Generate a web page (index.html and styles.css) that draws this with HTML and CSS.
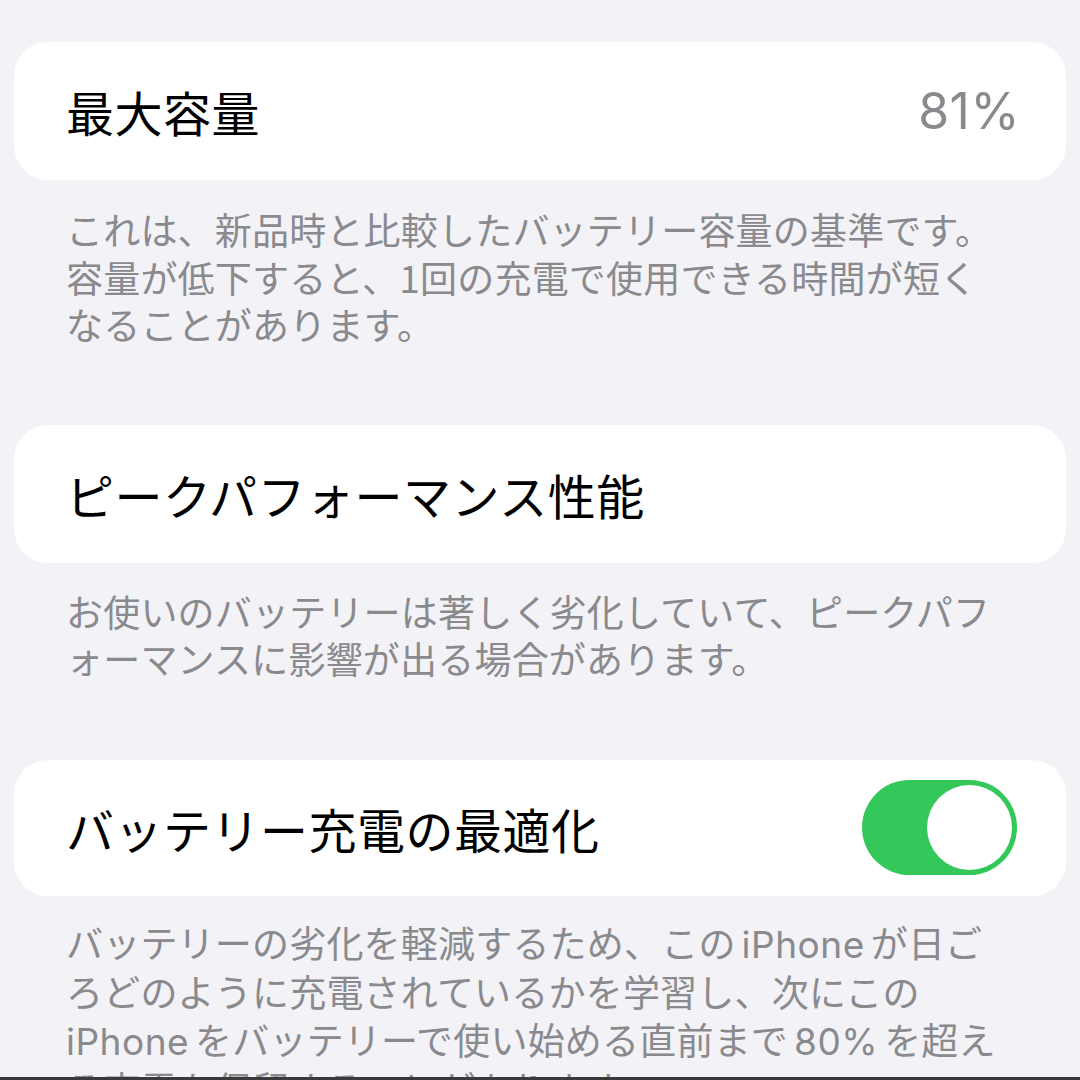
FILE: index.html
```html
<!DOCTYPE html>
<html lang="ja">
<head>
<meta charset="utf-8">
<title>バッテリーの状態</title>
<link rel="stylesheet" href="styles.css">
</head>
<body>
<div class="page">
  <div class="card card-first">
    <span class="title">最大容量</span>
    <span class="value">81%</span>
  </div>
  <p class="footer footer-first">これは、新品時と比較したバッテリー容量の基準です。<br>容量が低下すると、1回の充電で使用できる時間が短く<br>なることがあります。</p>

  <div class="card card-second">
    <span class="title">ピークパフォーマンス性能</span>
  </div>
  <p class="footer footer-second">お使いのバッテリーは著しく劣化していて、ピークパフ<br>ォーマンスに影響が出る場合があります。</p>

  <div class="card card-third">
    <span class="title">バッテリー充電の最適化</span>
    <span class="toggle"><span class="knob"></span></span>
  </div>
  <p class="footer footer-third">バッテリーの劣化を軽減するため、この<span class="latin">iPhone</span>が日ご<br>ろどのように充電されているかを学習し、次にこの<br><span class="latin latin-start">iPhone</span>をバッテリーで使い始める直前まで<span class="latin">80%</span>を超え<br>る充電を保留することがあります。</p>
</div>
</body>
</html>
```

FILE: styles.css
```css
html, body {
  margin: 0;
  padding: 0;
}

body {
  background: #f2f2f7;
  height: 1077px;
  overflow: hidden;
  border-bottom: 3px solid #3a3a3c;
  font-family: Inter, "Noto Sans CJK JP", sans-serif;
}

.page {
  padding: 42px 14px 0 14px;
}

.card {
  background: #ffffff;
  border-radius: 34px;
  height: 138px;
  display: flex;
  align-items: center;
  justify-content: space-between;
  padding: 0 50px 0 52px;
  box-sizing: border-box;
}

.card-first {
  padding-right: 46px;
}

.card-third {
  height: 136px;
  padding-right: 49px;
}

.title {
  font-family: "Noto Sans CJK JP", sans-serif;
  font-size: 48px;
  letter-spacing: 0.5px;
  line-height: 60px;
  color: #000000;
  white-space: nowrap;
}

.value {
  font-family: Inter, "Noto Sans CJK JP", sans-serif;
  font-size: 50px;
  line-height: 60px;
  color: #8a8a8e;
  letter-spacing: 0.5px;
}

.footer {
  margin: 0;
  padding: 26px 52px 0 52px;
  font-family: "Noto Sans CJK JP", sans-serif;
  font-size: 37px;
  letter-spacing: 0.2px;
  line-height: 47.5px;
  color: #8a8a8e;
  white-space: nowrap;
}

.footer-first {
  margin-bottom: 76px;
}

.footer-second {
  padding-top: 25px;
  margin-bottom: 77px;
}

.footer-third {
  padding-top: 23px;
}

.latin {
  font-family: Inter, "Noto Sans CJK JP", sans-serif;
  margin: 0 6px;
  letter-spacing: 0.5px;
}

.latin-start {
  margin-left: 0;
}

.toggle {
  width: 155px;
  height: 95px;
  border-radius: 48px;
  background: #34c759;
  display: flex;
  align-items: center;
  justify-content: flex-end;
  padding: 0 5px;
  box-sizing: border-box;
}

.knob {
  width: 85px;
  height: 85px;
  border-radius: 50%;
  background: #ffffff;
}
```
